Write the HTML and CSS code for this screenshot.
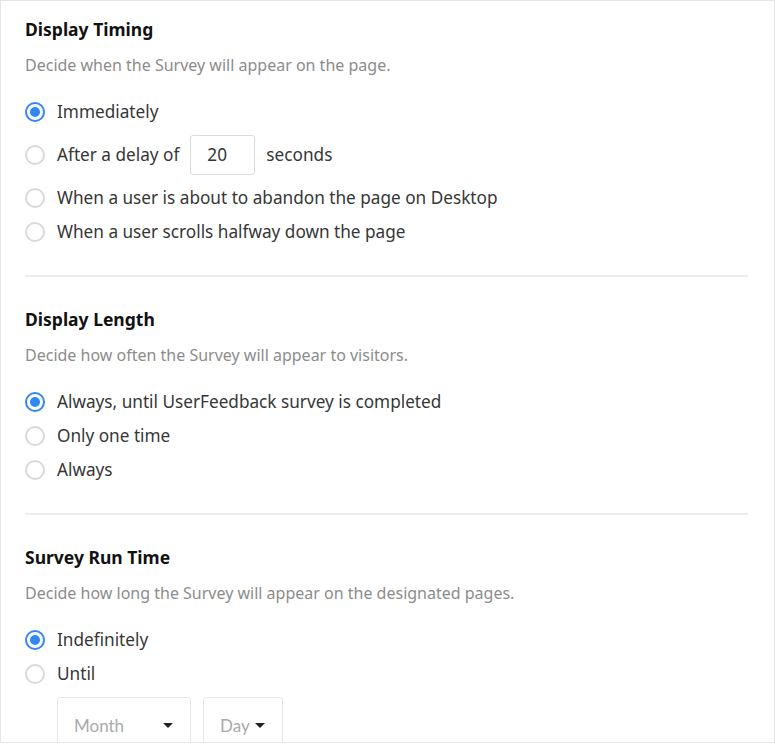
FILE: index.html
```html
<!DOCTYPE html>
<html>
<head>
<meta charset="utf-8">
<link rel="stylesheet" href="styles.css">
</head>
<body>
<div class="card">
  <section class="section">
    <h2 class="title">Display Timing</h2>
    <p class="desc">Decide when the Survey will appear on the page.</p>
    <div class="options">
      <label class="opt"><span class="radio checked"></span><span class="lbl">Immediately</span></label>
      <label class="opt opt-input"><span class="radio"></span><span class="lbl">After a delay of</span><span class="num">20</span><span class="lbl">seconds</span></label>
      <label class="opt"><span class="radio"></span><span class="lbl">When a user is about to abandon the page on Desktop</span></label>
      <label class="opt"><span class="radio"></span><span class="lbl">When a user scrolls halfway down the page</span></label>
    </div>
  </section>
  <hr class="sep">
  <section class="section">
    <h2 class="title">Display Length</h2>
    <p class="desc">Decide how often the Survey will appear to visitors.</p>
    <div class="options">
      <label class="opt"><span class="radio checked"></span><span class="lbl">Always, until UserFeedback survey is completed</span></label>
      <label class="opt"><span class="radio"></span><span class="lbl">Only one time</span></label>
      <label class="opt"><span class="radio"></span><span class="lbl">Always</span></label>
    </div>
  </section>
  <hr class="sep">
  <section class="section">
    <h2 class="title">Survey Run Time</h2>
    <p class="desc">Decide how long the Survey will appear on the designated pages.</p>
    <div class="options">
      <label class="opt"><span class="radio checked"></span><span class="lbl">Indefinitely</span></label>
      <label class="opt"><span class="radio"></span><span class="lbl">Until</span></label>
    </div>
    <div class="dates">
      <div class="select sel-month"><span>Month</span><span class="caret"></span></div>
      <div class="select sel-day"><span>Day</span><span class="caret"></span></div>
    </div>
  </section>
</div>
</body>
</html>
```
FILE: styles.css
```css
* { box-sizing: border-box; }
html, body { margin: 0; padding: 0; background: #fff; }
body {
  font-family: "Noto Sans", "Open Sans", sans-serif;
  color: #363636;
  width: 775px;
  height: 744px;
  overflow: hidden;
}
.card {
  border: 1px solid #e6e6e6;
  height: 743px;
  width: 775px;
  padding: 0 26px 0 24px;
  overflow: hidden;
}
.section { padding-top: 16px; }
.sep + .section { padding-top: 30px; }
.title {
  margin: 0;
  font-size: 17.5px;
  font-weight: 700;
  color: #111;
  line-height: 24px;
}
.desc {
  margin: 13px 0 0;
  font-size: 16px;
  color: #8c8c8c;
  line-height: 22px;
}
.options {
  margin-top: 24px;
  display: flex;
  flex-direction: column;
  gap: 10px;
}
.opt {
  display: flex;
  align-items: center;
  min-height: 24px;
  font-size: 17.2px;
  line-height: 24px;
}
.opt-input { min-height: 42px; }
.radio {
  width: 20px;
  height: 20px;
  border-radius: 50%;
  border: 2px solid #d6d9de;
  margin-right: 12px;
  flex: none;
  display: flex;
  align-items: center;
  justify-content: center;
}
.radio.checked { border: 2px solid #3088f0; }
.radio.checked::after {
  content: "";
  width: 10px;
  height: 10px;
  border-radius: 50%;
  background: #3088f0;
}
.num {
  width: 65px;
  height: 40px;
  border: 1px solid #dcdcdc;
  border-radius: 3px;
  margin: 0 11px 0 11px;
  padding-left: 16px;
  display: flex;
  align-items: center;
}
.sep {
  border: 0;
  border-top: 2px solid #ededf0;
  margin: 31px 0 0;
}
.dates {
  margin-top: 11px;
  padding-left: 32px;
  display: flex;
  gap: 12px;
}
.select {
  height: 56px;
  border: 1px solid #e6e6e6;
  border-radius: 3px;
  font-family: Lato, sans-serif;
  font-size: 17px;
  color: #aaa;
  display: flex;
  align-items: center;
  padding-left: 16px;
}
.sel-month { width: 134px; justify-content: space-between; padding-right: 17px; }
.sel-day { width: 80px; padding-right: 12px; }
.sel-day .caret { margin-left: 5px; }
.caret {
  width: 0; height: 0;
  border-left: 5px solid transparent;
  border-right: 5px solid transparent;
  border-top: 5px solid #222;
}
```
